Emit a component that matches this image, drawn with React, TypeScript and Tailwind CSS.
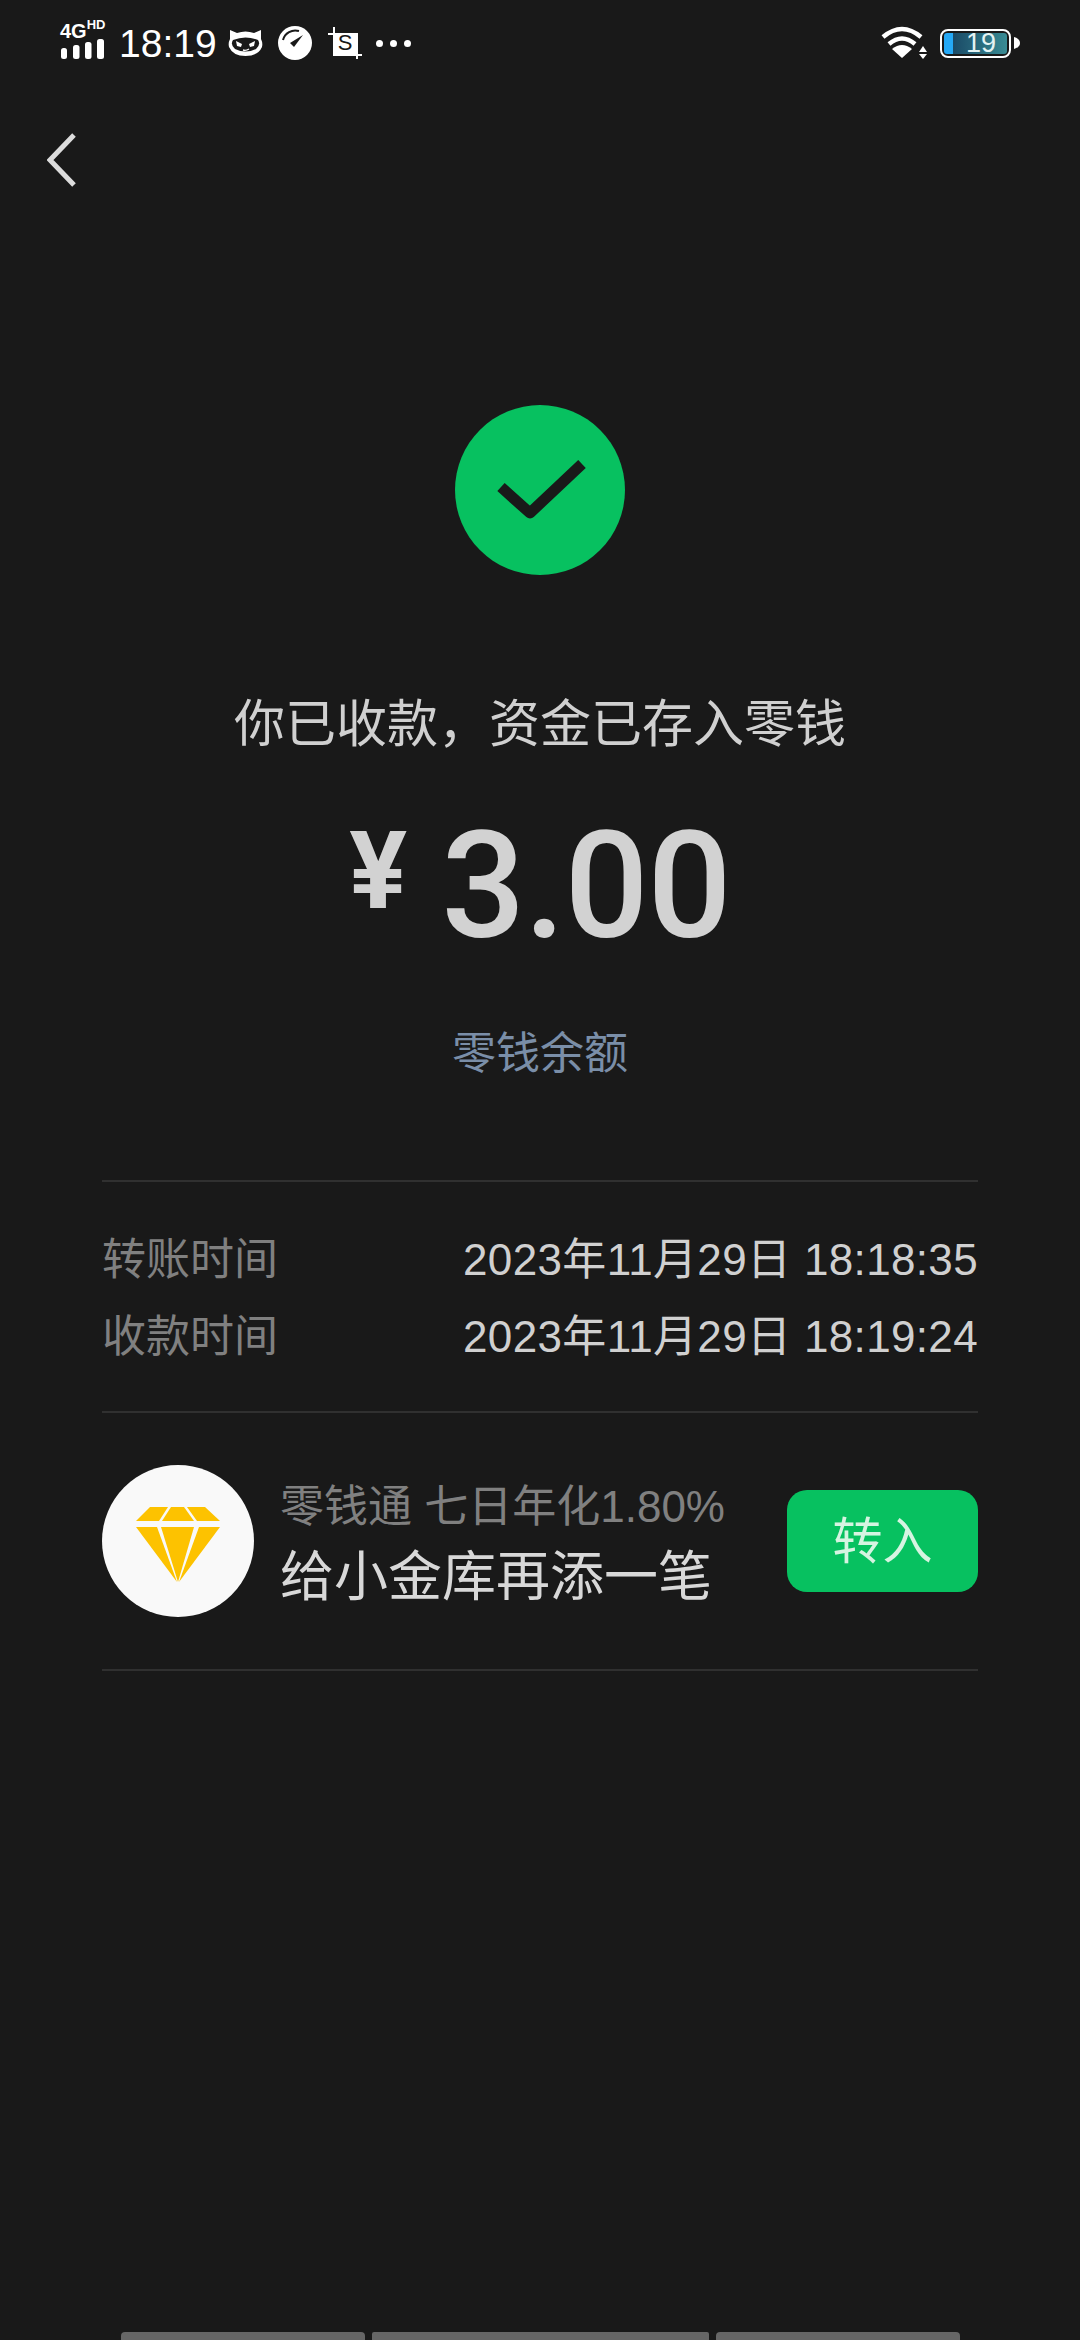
const cjk = 'font-["Liberation_Sans","Noto_Sans_CJK_SC",sans-serif]'

const SignalIcon = () => (
  <div className="-mt-[7px] flex w-[46px] flex-col items-start text-white">
    <div className="flex h-[18px] items-start font-['Liberation_Sans',sans-serif] font-bold leading-none">
      <span className="mt-[1px] text-[20px] leading-none">4G</span>
      <span className="-mt-[2px] text-[13px] leading-none">HD</span>
    </div>
    <svg className="mt-[1px]" width="46" height="20" viewBox="0 0 46 20" fill="#fff">
      <rect x="1" y="9" width="6" height="11" rx="2.5" />
      <rect x="13" y="6" width="6.5" height="14" rx="2.5" />
      <rect x="25" y="3" width="6.5" height="17" rx="2.5" />
      <rect x="37" y="0" width="7" height="20" rx="2.5" />
    </svg>
  </div>
)

const CatIcon = () => (
  <svg width="35" height="28" viewBox="0 0 35 28">
    <path d="M2 1 L9 4 Q17.5 1 26 4 L33 1 L33 10 Q35 14 34 18 Q30 27 17.5 27 Q5 27 1 18 Q0 14 2 10 Z" fill="#fff" />
    <path d="M5 11 Q17.5 6 30 11 Q33 16 28 20 Q17.5 25 7 20 Q2 16 5 11 Z" fill="#191919" />
    <path d="M8 12 L14 15 L13 18 L9 17 Z" fill="#fff" />
    <path d="M27 12 L21 15 L22 18 L26 17 Z" fill="#fff" />
    <path d="M15 21 Q18 22 21 20" stroke="#fff" strokeWidth="1.4" fill="none" />
  </svg>
)

const GaugeIcon = () => (
  <svg width="34" height="34" viewBox="0 0 34 34">
    <circle cx="17" cy="17" r="17" fill="#fff" />
    <path d="M5 14 A12.6 12.6 0 0 1 21 5" stroke="#191919" strokeWidth="2" fill="none" />
    <path d="M25 9 L16 21 L12 17 Z" fill="#191919" />
  </svg>
)

const CropIcon = () => (
  <div className="relative flex h-[32px] w-[34px] items-center justify-center">
    <div className="absolute left-[5px] top-[6px] h-[22px] w-[24px] bg-white" />
    <div className="absolute left-0 top-[6px] h-[2px] w-[29px] bg-white" />
    <div className="absolute left-[5px] top-0 h-[28px] w-[2px] bg-white" />
    <div className="absolute left-[5px] top-[27px] h-[2px] w-[29px] bg-white" />
    <div className="absolute left-[28px] top-[6px] h-[26px] w-[2px] bg-white" />
    <span className="relative font-['Liberation_Sans',sans-serif] text-[22px] leading-none text-[#191919]">S</span>
  </div>
)

const WifiIcon = () => (
  <svg width="46" height="34" viewBox="0 0 46 34" fill="none">
    <path d="M2 11 Q21 -5 40 11" stroke="#fff" strokeWidth="4.5" />
    <path d="M8 18 Q21 7 34 18" stroke="#fff" strokeWidth="4.5" />
    <path d="M21 32 L11 23 Q21 15 31 23 Z" fill="#fff" />
    <path d="M42 20 L46 26 L38 26 Z" fill="#fff" />
    <path d="M38 28 L46 28 L42 33 Z" fill="#fff" />
  </svg>
)

const BatteryIcon = () => (
  <div className="flex items-center">
    <div className="flex h-[29px] w-[71px] overflow-hidden rounded-[8px] border-2 border-white p-[2px]">
      <div className="w-[9px] rounded-l-[3px] bg-[#25a9f6]" />
      <div className="flex flex-1 items-center justify-end rounded-r-[3px] bg-gradient-to-r from-[#1a4a66] to-[#3a8c94] pr-[11px] font-['Liberation_Sans',sans-serif] text-[27px] leading-none text-[#e4f3f3]">
        19
      </div>
    </div>
    <svg className="ml-[3px]" width="6" height="14" viewBox="0 0 7 14">
      <path d="M0 0 Q7 2 7 7 Q7 12 0 14 Z" fill="#fff" />
    </svg>
  </div>
)

const Diamond = () => (
  <svg className="mt-[7px]" width="84" height="75" viewBox="36 47 84 75" fill="#fdc200">
    <polygon points="36,61 50,47 68,47 59,61" />
    <polygon points="62,61 71,47 84,47 94,61" />
    <polygon points="87,47 105,47 120,61 97,61" />
    <polygon points="36,67 57,67 77,122" />
    <polygon points="61,67 94,67 78,122" />
    <polygon points="120,67 99,67 79,122" />
  </svg>
)

const rows = [
  { label: '转账时间', value: '2023年11月29日 18:18:35' },
  { label: '收款时间', value: '2023年11月29日 18:19:24' },
]

export default function App() {
  return (
    <div className={`flex h-[2340px] w-[1080px] flex-col bg-[#191919] ${cjk}`}>
      <div className="flex h-[80px] items-center pl-[60px] pt-[6px]">
        <SignalIcon />
        <span className="ml-[13px] w-[109px] font-['Liberation_Sans',sans-serif] text-[39px] leading-none text-white">18:19</span>
        <CatIcon />
        <div className="ml-[15px]"><GaugeIcon /></div>
        <div className="ml-[16px]"><CropIcon /></div>
        <div className="ml-[14px] flex gap-[7px]">
          <div className="h-[7px] w-[7px] rounded-full bg-white" />
          <div className="h-[7px] w-[7px] rounded-full bg-white" />
          <div className="h-[7px] w-[7px] rounded-full bg-white" />
        </div>
        <div className="ml-auto flex items-center pr-[60px]">
          <WifiIcon />
          <div className="ml-[13px]"><BatteryIcon /></div>
        </div>
      </div>

      <div className="mt-[53px] pl-[47px]">
        <svg className="block" width="30" height="54" viewBox="0 0 30 54" fill="none">
          <path d="M27 2 L3 27 L27 52" stroke="#dcdcdc" strokeWidth="5" />
        </svg>
      </div>

      <div className="mt-[218px] flex flex-col items-center">
        <div className="h-[170px] w-[170px] rounded-full bg-[#07c160]">
          <svg className="block" width="170" height="170" viewBox="0 0 170 170" fill="none">
            <path d="M46 82 L75 108 L127 59" stroke="#191919" strokeWidth="11" strokeLinejoin="round" />
          </svg>
        </div>
        <h1 className="mt-[120px] h-[60px] text-[51px] font-normal leading-[60px] text-[#d0d0d0]">你已收款，资金已存入零钱</h1>
        <div className="mt-[65px] flex h-[130px] items-center text-[#d2d2d2] font-['Roboto',sans-serif]">
          <span className="mb-[28px] mr-[34px] text-[108px] font-bold leading-none">¥</span>
          <span className="mt-[4px] text-[148px] font-medium leading-none tracking-[-1px]">3.00</span>
        </div>
        <div className="mt-[74px] h-[60px] text-[44px] leading-[60px] text-[#7a8ea8]">零钱余额</div>
      </div>

      <div className="mx-[102px] mt-[96px] border-y-2 border-[#303030] pb-[44px] pt-[48px]">
        <div className="flex flex-col gap-[17px]">
          {rows.map((row) => (
            <div key={row.label} className="flex h-[60px] items-center justify-between text-[44px] leading-[60px]">
              <span className="text-[#808080]">{row.label}</span>
              <span className="tracking-[0.35px] text-[#d0d0d0]">{row.value}</span>
            </div>
          ))}
        </div>
      </div>

      <div className="mx-[102px] flex items-center border-b-2 border-[#303030] py-[52px]">
        <div className="flex h-[152px] w-[152px] items-center justify-center rounded-full bg-[#f9f9f9]">
          <Diamond />
        </div>
        <div className="ml-[26px] flex flex-col pt-[8px]">
          <span className="h-[56px] text-[44px] leading-[56px] text-[#808080]">零钱通 七日年化1.80%</span>
          <span className="mt-[7px] h-[70px] text-[54px] leading-[70px] text-[#d8d8d8]">给小金库再添一笔</span>
        </div>
        <div className="ml-auto flex h-[102px] w-[191px] items-center justify-center rounded-[20px] bg-[#07c160] pt-[2px] text-[50px] text-[#d6f4e1]">
          转入
        </div>
      </div>

      <div className="mt-auto flex h-[8px] gap-[7px] pl-[121px]">
        <div className="w-[244px] rounded-t-[4px] bg-[#666666]" />
        <div className="w-[337px] rounded-t-[2px] bg-[#666666]" />
        <div className="w-[244px] rounded-t-[4px] bg-[#666666]" />
      </div>
    </div>
  )
}
